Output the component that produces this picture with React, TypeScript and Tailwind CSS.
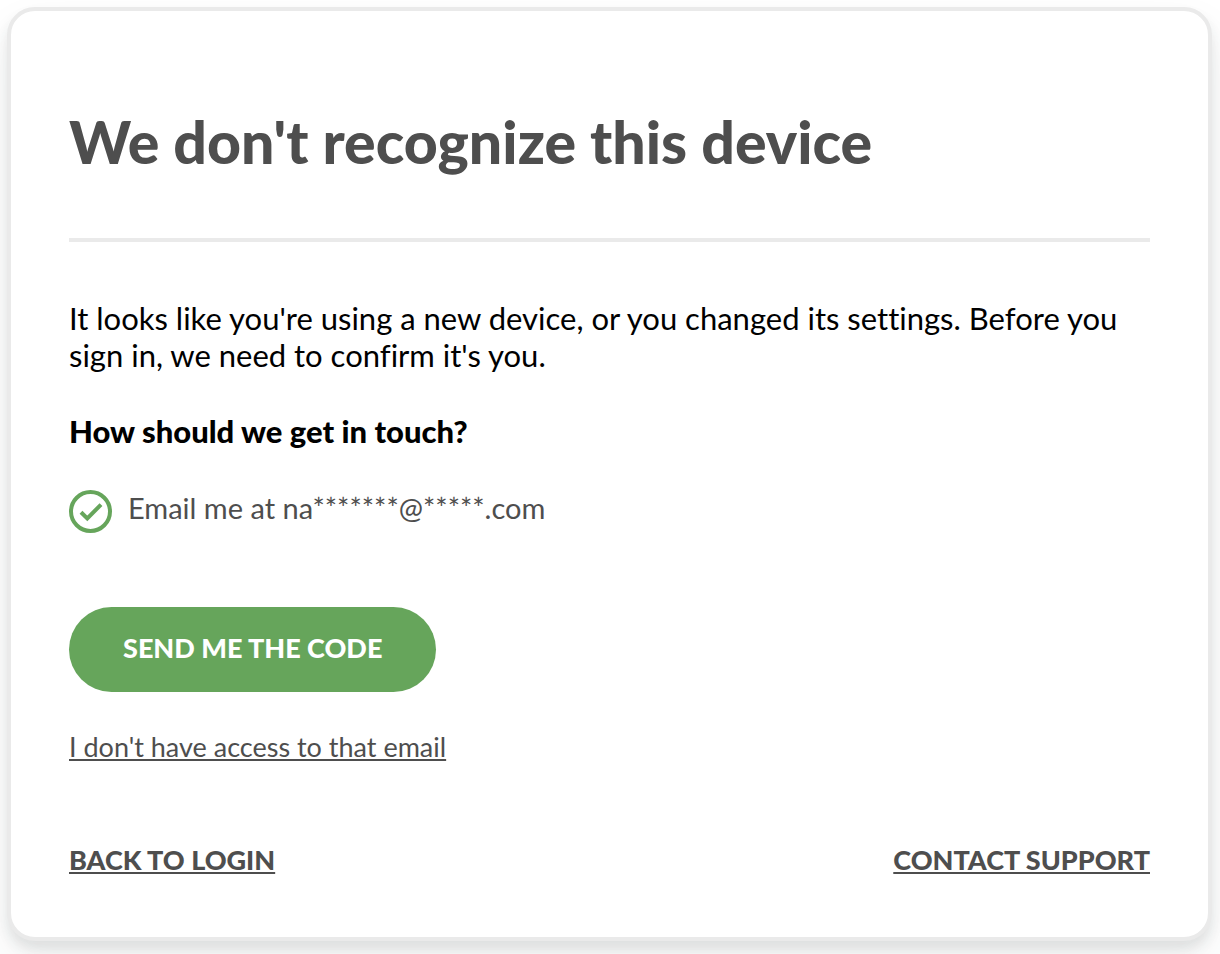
import { useState } from "react";

interface ContactOption {
  id: string;
  label: string;
}

const options: ContactOption[] = [
  { id: "email", label: "Email me at na*******@*****.com" },
];

function ContactRadio({
  option,
  checked,
  onChange,
}: {
  option: ContactOption;
  checked: boolean;
  onChange: (id: string) => void;
}) {
  return (
    <div className="flex items-start gap-4">
      <span className="relative size-[43px] shrink-0">
        <input
          type="radio"
          id={option.id}
          name="contact"
          checked={checked}
          onChange={() => onChange(option.id)}
          className="block size-full cursor-pointer appearance-none rounded-full border-4 border-[#66a55b] bg-white"
        />
        {checked && (
          <svg
            viewBox="0 0 43 43"
            fill="none"
            stroke="#66a55b"
            strokeWidth="4"
            className="pointer-events-none absolute inset-0"
          >
            <path d="M12 22.2l6.3 6.2L32 14.6" />
          </svg>
        )}
      </span>
      <label
        htmlFor={option.id}
        className="cursor-pointer text-[29px] leading-9 text-[#4e4e4e]"
      >
        {option.label}
      </label>
    </div>
  );
}

export default function App() {
  const [selected, setSelected] = useState("email");

  return (
    <main className="overflow-hidden bg-white pt-[7px] pr-2 pb-[13px] pl-[7px] font-['Lato',sans-serif] [font-variant-ligatures:none]">
      <form
        onSubmit={(e) => e.preventDefault()}
        className="rounded-[28px] border-4 border-[#eaeaea] bg-white px-[58px] pt-[95px] pb-[61px] shadow-[0_8px_12px_rgba(50,60,60,0.10),0_20px_40px_rgba(50,60,60,0.08)]"
      >
        <h1 className="text-[59px] leading-[72px] font-black text-[#4e4e4e]">
          We don't recognize this device
        </h1>

        <hr className="mt-[60px] border-t-4 border-[#eaeaea]" />

        <p className="mt-[58px] text-[31px] leading-[37px] text-black">
          It looks like you're using a new device, or you changed its settings. Before you sign in,
          we need to confirm it's you.
        </p>

        <fieldset className="mt-[39px]">
          <legend className="mb-10 text-[31px] leading-[37px] font-black text-black">
            How should we get in touch?
          </legend>
          {options.map((option) => (
            <ContactRadio
              key={option.id}
              option={option}
              checked={selected === option.id}
              onChange={setSelected}
            />
          ))}
        </fieldset>

        <button
          type="submit"
          className="mt-[74px] block h-[85px] cursor-pointer rounded-full bg-[#66a55b] px-[54px] pb-[3px] text-[27px] leading-8 font-black text-white uppercase"
        >
          Send me the code
        </button>

        <a
          href="#no-access"
          className="mt-[39px] block w-fit text-[27px] leading-8 text-[#4e4e4e] underline decoration-2 underline-offset-2"
        >
          I don't have access to that email
        </a>

        <div className="mt-[81px] flex items-center justify-between text-[27px] leading-8 font-black text-[#4e4e4e] uppercase">
          <a href="#login" className="underline decoration-2 underline-offset-2">
            Back to login
          </a>
          <a href="#support" className="underline decoration-2 underline-offset-2">
            Contact support
          </a>
        </div>
      </form>
    </main>
  );
}
